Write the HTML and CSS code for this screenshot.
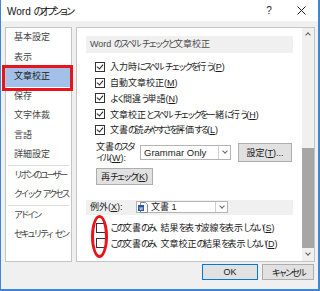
FILE: index.html
```html
<!DOCTYPE html>
<html lang="ja">
<head>
    <meta charset="UTF-8">
    <title>Word のオプション</title>
    <link rel="stylesheet" href="styles.css">
</head>
<body>
    <div class="window">
        <div class="titlebar">
            <span class="title">Word <span class="k">のオプション</span></span>
            <span class="help">?</span>
            <span class="close">
                <svg width="9" height="9" viewBox="0 0 9 9"><path d="M0.5 0.5 L8.5 8.5 M8.5 0.5 L0.5 8.5" stroke="#222" stroke-width="1"/></svg>
            </span>
        </div>

        <div class="main">
            <ul class="nav">
                <li>基本設定</li>
                <li>表示</li>
                <li class="active">文章校正</li>
                <li>保存</li>
                <li>文字体裁</li>
                <li>言語</li>
                <li>詳細設定</li>
                <li class="sep"></li>
                <li><span class="k">リボンのユーザー</span></li>
                <li><span class="k">クイック</span> <span class="k">アクセス</span></li>
                <li class="sep"></li>
                <li><span class="k">アドイン</span></li>
                <li><span class="k">セキュリティ</span> <span class="k">セン</span></li>
            </ul>

            <div class="panel">
                <div class="scroll-area">
                    <div class="band">Word <span class="k">のスペル</span> <span class="k">チェックと</span>文章校正</div>

                    <div class="checks">
                        <div class="check-row"><span class="box checked"></span><span>入力時<span class="k">にスペル</span> <span class="k">チェックを</span>行<span class="k">う</span>(<u>P</u>)</span></div>
                        <div class="check-row"><span class="box checked"></span><span>自動文章校正(<u>M</u>)</span></div>
                        <div class="check-row"><span class="box checked"></span><span><span class="k">よく</span>間違<span class="k">う</span>単語(<u>N</u>)</span></div>
                        <div class="check-row"><span class="box checked"></span><span>文章校正<span class="k">とスペル</span> <span class="k">チェックを</span>一緒<span class="k">に</span>行<span class="k">う</span>(<u>H</u>)</span></div>
                        <div class="check-row"><span class="box checked"></span><span>文書<span class="k">の</span>読<span class="k">みやすさを</span>評価<span class="k">する</span>(<u>L</u>)</span></div>
                    </div>

                    <div class="style-row">
                        <div class="style-label">文書<span class="k">のスタ</span><br><span class="k">イル</span>(<u>W</u>):</div>
                        <div class="select style-select">
                            <span class="select-text">Grammar Only</span>
                            <span class="select-btn"></span>
                        </div>
                        <button class="btn settings-btn">設定(<u>T</u>)...</button>
                    </div>

                    <button class="btn recheck-btn">再<span class="k">チェック</span>(<u>K</u>)</button>

                    <div class="band except-band">
                        <span class="except-label">例外(<u>X</u>):</span>
                        <div class="select doc-select">
                            <svg class="doc-icon" width="10" height="11" viewBox="0 0 10 11">
                                <path d="M2.5 0.5 H7.5 L9.5 2.5 V10.5 H2.5 Z" fill="#fff" stroke="#8a8a8a"/>
                                <rect x="0" y="3" width="6" height="6" fill="#2b5797"/>
                                <text x="3" y="8" font-size="5" font-family="DejaVu Sans" fill="#fff" text-anchor="middle">w</text>
                            </svg>
                            <span class="select-text">文書 1</span>
                            <span class="select-btn"></span>
                        </div>
                    </div>

                    <div class="checks bottom-checks">
                        <div class="check-row"><span class="box"></span><span><span class="k">この</span>文書<span class="k">のみ、</span>結果<span class="k">を</span>表<span class="k">す</span>波線<span class="k">を</span>表示<span class="k">しない</span>(<u>S</u>)</span></div>
                        <div class="check-row"><span class="box"></span><span><span class="k">この</span>文書<span class="k">のみ、</span>文章校正<span class="k">の</span>結果<span class="k">を</span>表示<span class="k">しない</span>(<u>D</u>)</span></div>
                    </div>
                </div>

                <div class="scrollbar">
                    <div class="sb-arrow up"></div>
                    <div class="sb-track"><div class="sb-thumb"></div></div>
                    <div class="sb-arrow down"></div>
                </div>
            </div>
        </div>

        <div class="footer">
            <button class="btn ok-btn">OK</button>
            <button class="btn cancel-btn"><span class="k">キャンセル</span></button>
        </div>

        <!-- annotations -->
        <div class="mark-rect"></div>
        <div class="mark-ellipse"></div>
    </div>
</body>
</html>
```

FILE: styles.css
```css
body {
    margin: 0;
    font-family: "Liberation Sans", "Noto Sans CJK JP", sans-serif;
    color: #1a1a1a;
}
/* kana runs: narrower, like Meiryo UI */
.k {
    letter-spacing: -0.28em;
}
.window {
    position: relative;
    width: 320px;
    height: 291px;
    box-sizing: border-box;
    background-color: #f0f0f0;
    border-left: 1px solid #3d86d3;
    border-right: 2px solid #3d86d3;
    border-bottom: 2px solid #3d86d3;
    display: flex;
    flex-direction: column;
}
.titlebar {
    height: 21px;
    flex: none;
    background-color: #fff;
    display: flex;
    align-items: center;
    padding-left: 6px;
}
.title {
    flex: 1;
    font-size: 10px;
    color: #111;
}
.title .k {
    letter-spacing: -0.36em;
}
.help {
    font-size: 10px;
    width: 16px;
    text-align: center;
    color: #222;
}
.close {
    width: 16px;
    margin: 0 9px 0 16px;
    display: flex;
    justify-content: center;
}
.main {
    display: flex;
    gap: 4px;
    padding: 6px 3px 0 4px;
    height: 235px;
    flex: none;
}
.nav {
    list-style: none;
    margin: 0;
    padding: 0;
    width: 67px;
    box-sizing: border-box;
    background-color: #fff;
    border: 1px solid #c4c4c4;
    font-size: 9px;
    color: #444;
}
.nav li {
    height: 19.5px;
    line-height: 19.5px;
    padding-left: 8px;
    white-space: nowrap;
    overflow: hidden;
}
.nav li.active {
    background-color: #a3c1e8;
    color: #222;
}
.nav li.sep {
    height: 1px;
    margin: 0 2px;
    background-color: #dcdcdc;
}
.panel {
    width: 239px;
    box-sizing: border-box;
    background-color: #fff;
    border: 1px solid #c4c4c4;
    display: flex;
}
.scroll-area {
    flex: 1;
    overflow: hidden;
    font-size: 9px;
}
.band {
    margin: 8px 9px 0 9px;
    height: 17px;
    line-height: 17px;
    padding-left: 4px;
    background-color: #f0f0f0;
    color: #4a4a4a;
    font-size: 9px;
    white-space: nowrap;
}
.checks {
    margin-top: 6px;
}
.check-row {
    height: 15.75px;
    display: flex;
    align-items: center;
    gap: 5px;
    padding-left: 18px;
    white-space: nowrap;
}
.box {
    width: 10px;
    height: 10px;
    box-sizing: border-box;
    border: 1px solid #333;
    background-color: #fff;
    flex: none;
    position: relative;
}
.box.checked::after {
    content: "";
    position: absolute;
    left: 2px;
    top: 0px;
    width: 3px;
    height: 5px;
    border-right: 1px solid #222;
    border-bottom: 1px solid #222;
    transform: rotate(40deg);
}
.style-row {
    margin-top: 3px;
    height: 24px;
    display: flex;
    align-items: center;
    padding-left: 19px;
}
.style-label {
    width: 42px;
    line-height: 11px;
    margin-right: 2px;
    white-space: nowrap;
}
.select {
    height: 15px;
    box-sizing: border-box;
    border: 1px solid #b4b4b4;
    background-color: #fff;
    display: flex;
    align-items: center;
}
.select-text {
    flex: 1;
    padding-left: 3px;
    white-space: nowrap;
}
.style-select .select-text {
    font-size: 9.5px;
}
.select-btn {
    width: 12px;
    height: 13px;
    box-sizing: border-box;
    border-left: 1px solid #d0d0d0;
    position: relative;
}
.select-btn::after {
    content: "";
    position: absolute;
    left: 3.5px;
    top: 3px;
    width: 3px;
    height: 3px;
    border-right: 1px solid #666;
    border-bottom: 1px solid #666;
    transform: rotate(45deg);
}
.style-select {
    width: 91px;
}
.btn {
    font-family: inherit;
    font-size: 9px;
    color: #1a1a1a;
    background-color: #e1e1e1;
    border: 1px solid #adadad;
    padding: 0;
    white-space: nowrap;
}
.settings-btn {
    width: 54px;
    height: 19px;
    margin-left: 7px;
}
.recheck-btn {
    display: block;
    margin: 3px 0 0 19px;
    width: 57px;
    height: 17px;
}
.except-band {
    margin-top: 15px;
    height: 15px;
    line-height: 15px;
    display: flex;
    align-items: center;
    color: #1a1a1a;
    font-size: 9px;
}
.except-label {
    width: 46px;
}
.doc-select {
    width: 92px;
    height: 12px;
    padding-left: 1px;
}
.doc-select .select-btn {
    height: 10px;
}
.doc-select .select-btn::after {
    top: 2px;
}
.doc-icon {
    flex: none;
}
.bottom-checks {
    margin-top: 5px;
}
.bottom-checks .check-row {
    padding-left: 19px;
    gap: 4px;
}
.scrollbar {
    width: 12px;
    background-color: #f0f0f0;
    display: flex;
    flex-direction: column;
}
.sb-arrow {
    height: 13px;
    position: relative;
}
.sb-arrow::after {
    content: "";
    position: absolute;
    left: 4px;
    width: 3px;
    height: 3px;
    border-left: 1px solid #606060;
    border-top: 1px solid #606060;
}
.sb-arrow.up::after {
    top: 5px;
    transform: rotate(45deg);
}
.sb-arrow.down::after {
    top: 3px;
    transform: rotate(225deg);
}
.sb-track {
    flex: 1;
    display: flex;
    flex-direction: column;
    justify-content: flex-end;
}
.sb-thumb {
    height: 100px;
    background-color: #a6a6a6;
}
.footer {
    display: flex;
    justify-content: flex-end;
    gap: 4px;
    margin-top: 2px;
    padding-right: 4px;
}
.ok-btn {
    width: 56px;
    height: 16px;
    border-color: #0078d7;
}
.cancel-btn {
    width: 52px;
    height: 16px;
}
.mark-rect {
    position: absolute;
    left: 1px;
    top: 65px;
    width: 65px;
    height: 20px;
    border: 3px solid #e8141c;
}
.mark-ellipse {
    position: absolute;
    left: 90px;
    top: 215px;
    width: 11px;
    height: 37px;
    border: 3px solid #e8141c;
    border-radius: 50%;
}
```
